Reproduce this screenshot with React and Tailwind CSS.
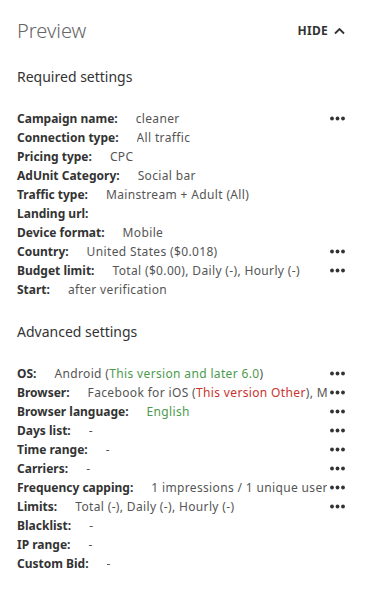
import React from 'react';

const Dots = () => (
  <svg width="15" height="5" viewBox="0 0 15 5" className="text-[#333]">
    <circle cx="2" cy="2.5" r="1.9" fill="currentColor" />
    <circle cx="7.5" cy="2.5" r="1.9" fill="currentColor" />
    <circle cx="13" cy="2.5" r="1.9" fill="currentColor" />
  </svg>
);

const Row = ({ label, children, dots }) => (
  <div className="flex items-center h-[19px]">
    <span className="shrink-0 font-bold text-[#333]">{label}</span>
    <span className="ml-[18px] flex-1 min-w-0 overflow-hidden whitespace-nowrap text-[#555] tracking-[0.35px]">{children}</span>
    <span className="w-[18px] shrink-0 flex justify-end">{dots && <Dots />}</span>
  </div>
);

const Green = ({ children }) => <span className="text-[#4b9b4b]">{children}</span>;
const Red = ({ children }) => <span className="text-[#c8332e]">{children}</span>;

export default function App() {
  return (
    <div className="w-[368px] h-[593px] bg-white pl-[17px] pr-[23px] pt-[17px] text-[12px]" style={{ fontFamily: '"Noto Sans", sans-serif' }}>
      <div className="flex items-center justify-between h-[28px]">
        <h1 className="text-[20px] font-light text-[#666] leading-[28px]">Preview</h1>
        <button className="flex items-center gap-[6px] text-[12px] font-bold text-[#333] tracking-wide">
          HIDE
          <svg width="11" height="8" viewBox="0 0 11 8" fill="none" stroke="currentColor" strokeWidth="1.8">
            <path d="M1 6.5 L5.5 2 L10 6.5" />
          </svg>
        </button>
      </div>

      <h2 className="mt-[22px] text-[14px] leading-[20px] text-[#333]">Required settings</h2>
      <div className="mt-[22px]">
        <Row label="Campaign name:" dots>cleaner</Row>
        <Row label="Connection type:">All traffic</Row>
        <Row label="Pricing type:">CPC</Row>
        <Row label="AdUnit Category:">Social bar</Row>
        <Row label="Traffic type:">Mainstream + Adult (All)</Row>
        <Row label="Landing url:"></Row>
        <Row label="Device format:">Mobile</Row>
        <Row label="Country:" dots>United States ($0.018)</Row>
        <Row label="Budget limit:" dots>Total ($0.00), Daily (-), Hourly (-)</Row>
        <Row label="Start:">after verification</Row>
      </div>

      <h2 className="mt-[23px] text-[14px] leading-[20px] text-[#333]">Advanced settings</h2>
      <div className="mt-[22px]">
        <Row label="OS:" dots>Android (<Green>This version and later 6.0</Green>)</Row>
        <Row label="Browser:" dots>Facebook for iOS (<Red>This version Other</Red>), Messenger</Row>
        <Row label="Browser language:" dots><Green>English</Green></Row>
        <Row label="Days list:" dots>-</Row>
        <Row label="Time range:" dots>-</Row>
        <Row label="Carriers:" dots>-</Row>
        <Row label="Frequency capping:" dots>1 impressions / 1 unique user</Row>
        <Row label="Limits:" dots>Total (-), Daily (-), Hourly (-)</Row>
        <Row label="Blacklist:">-</Row>
        <Row label="IP range:">-</Row>
        <Row label="Custom Bid:">-</Row>
      </div>
    </div>
  );
}
